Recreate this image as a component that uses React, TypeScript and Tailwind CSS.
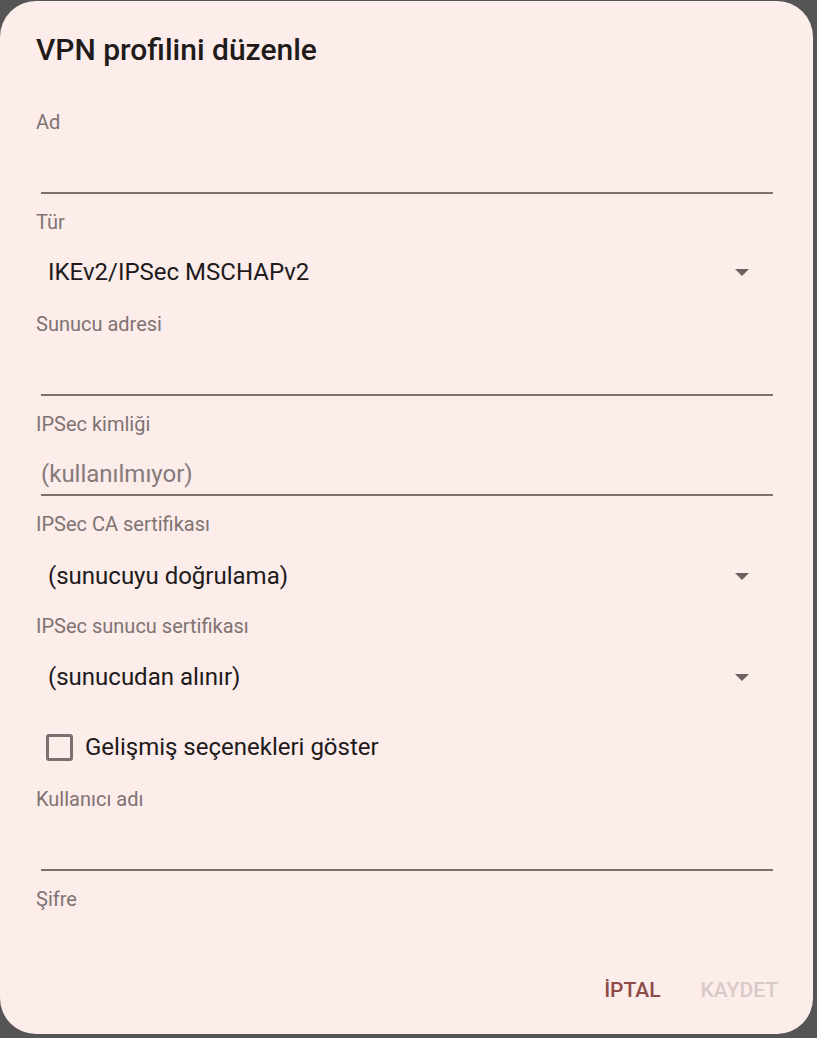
import React from "react";

const Label = ({ text, className = "" }: { text: string; className?: string }) => (
  <div className={`h-[28px] flex items-center text-[20px] text-[#7f7372] ${className}`}>{text}</div>
);

const Input = ({ placeholder, className = "" }: { placeholder?: string; className?: string }) => (
  <div
    className={`ml-[5px] mr-[4px] h-[58px] flex items-end pb-[6px] border-b-2 border-[#7d7170] text-[24px] text-[#857a79] ${className}`}
  >
    {placeholder && <span className="leading-[28px]">{placeholder}</span>}
  </div>
);

const Select = ({ value, className = "" }: { value: string; className?: string }) => (
  <div className={`h-[48px] flex items-center justify-between pl-[12px] pr-[28px] ${className}`}>
    <span className="text-[24px] text-[#201a1a]">{value}</span>
    <svg width="14" height="7" viewBox="0 0 14 7">
      <path d="M0 0 L14 0 L7 7 Z" fill="#6b6161" />
    </svg>
  </div>
);

export default function App() {
  return (
    <div className="w-[817px] h-[1038px] bg-[#555555] pt-[1px] font-['Roboto',sans-serif]">
      <div className="w-[813px] h-[1033px] bg-[#fcecea] rounded-[36px] px-[36px] flex flex-col">
        {/* titel */}
        <div className="mt-[23px] h-[50px] flex items-center text-[30px] font-medium text-[#201a1a]">
          VPN profilini düzenle
        </div>

        <Label text="Ad" className="mt-[34px]" />
        <Input />

        <Label text="Tür" className="mt-[14px]" />
        <Select value="IKEv2/IPSec MSCHAPv2" className="mt-[12px]" />

        <Label text="Sunucu adresi" className="mt-[14px]" />
        <Input />

        <Label text="IPSec kimliği" className="mt-[14px]" />
        <Input placeholder="(kullanılmıyor)" />

        <Label text="IPSec CA sertifikası" className="mt-[14px]" />
        <Select value="(sunucuyu doğrulama)" className="mt-[14px]" />

        <Label text="IPSec sunucu sertifikası" className="mt-[12px]" />
        <Select value="(sunucudan alınır)" className="mt-[13px]" />

        {/* checkbox */}
        <div className="mt-[22px] h-[48px] flex items-center pl-[10px]">
          <div className="w-[27px] h-[27px] rounded-[3px] border-[3px] border-[#7a706f]" />
          <span className="ml-[12px] text-[24px] text-[#201a1a]">Gelişmiş seçenekleri göster</span>
        </div>

        <Label text="Kullanıcı adı" className="mt-[14px]" />
        <Input />

        <Label text="Şifre" className="mt-[14px]" />

        {/* knoppen */}
        <div className="mt-[58px] -mr-[1px] h-[40px] flex items-center justify-end gap-[40px] text-[21px] font-medium">
          <span className="text-[#8e4a47]">İPTAL</span>
          <span className="text-[#d9c9c8]">KAYDET</span>
        </div>
      </div>
    </div>
  );
}
